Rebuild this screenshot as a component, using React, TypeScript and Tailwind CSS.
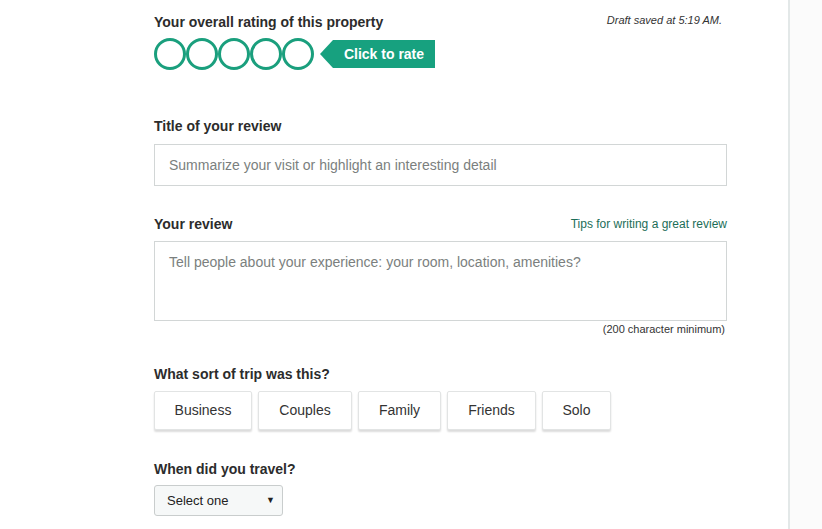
const trips = ["Business", "Couples", "Family", "Friends", "Solo"];
const tripWidths = ["w-[98px]", "w-[94px]", "w-[83px]", "w-[89px]", "w-[69px]"];

function Label({ children }: { children: React.ReactNode }) {
  return <h2 className="text-[14px] font-bold leading-4 text-[#2c2c2c]">{children}</h2>;
}

export default function App() {
  return (
    <div className="flex min-h-[529px] bg-white font-['Liberation_Sans',Arial,sans-serif] text-[#333]">
      <main className="w-[790px] shrink-0 border-r-2 border-[#e3e8e8] pl-[154px] pr-[61px] pt-[13px]">
        <div className="flex items-start justify-between">
          <div>
            <h1 className="text-[14px] font-bold leading-[18px] text-[#2c2c2c]">Your overall rating of this property</h1>
            <div className="mt-[7px] flex items-center">
              {[0, 1, 2, 3, 4].map((i) => (
                <span key={i} className="h-[32px] w-[32px] rounded-full border-[3px] border-[#1a9f7d]" />
              ))}
              <div className="ml-[6px] flex items-center">
                <span className="h-0 w-0 border-y-[14px] border-r-[13px] border-y-transparent border-r-[#17a17f]" />
                <span className="flex h-[28px] w-[102px] items-center justify-center bg-[#17a17f] text-[14px] font-bold text-white">
                  Click to rate
                </span>
              </div>
            </div>
          </div>
          <p className="pr-[5px] text-[11px] italic leading-[14px] text-[#333]">Draft saved at 5:19 AM.</p>
        </div>

        <div className="mt-[48px]">
          <Label>Title of your review</Label>
          <input
            className="mt-[10px] h-[42px] w-full border border-[#d2d6d6] px-[14px] text-[14px] text-[#333] outline-none placeholder:text-[#7b7f7e]"
            placeholder="Summarize your visit or highlight an interesting detail"
          />
        </div>

        <div className="mt-[30px]">
          <div className="flex items-end justify-between">
            <Label>Your review</Label>
            <a className="text-[12px] leading-4 text-[#1c6e58]">Tips for writing a great review</a>
          </div>
          <textarea
            className="mt-[9px] block h-[80px] w-full resize-none border border-[#d2d6d6] px-[14px] py-[11px] text-[14px] leading-[18px] outline-none placeholder:text-[#7b7f7e]"
            placeholder="Tell people about your experience: your room, location, amenities?"
          />
          <p className="mt-[2px] pr-[2px] text-right text-[11px] leading-3 text-[#333]">(200 character minimum)</p>
        </div>

        <div className="mt-[31px]">
          <Label>What sort of trip was this?</Label>
          <div className="mt-[9px] flex gap-[6px]">
            {trips.map((t, i) => (
              <button
                key={t}
                className={`${tripWidths[i]} h-[39px] rounded-[2px] border border-[#e2e4e4] bg-white text-[14px] text-[#333] shadow-[0_2px_2px_rgba(0,0,0,0.14)]`}
              >
                {t}
              </button>
            ))}
          </div>
        </div>

        <div className="mt-[31px] pb-4">
          <Label>When did you travel?</Label>
          <div className="mt-[8px] flex h-[31px] w-[129px] items-center justify-between rounded-[3px] border border-[#c9cdcd] bg-[#f6f8f8] pl-[12px] pr-[7px] text-[13px] text-[#222]">
            <span>Select one</span>
            <span className="text-[9px]">▼</span>
          </div>
        </div>
      </main>
      <aside className="flex-1 bg-[#fbfbfb]" />
    </div>
  );
}
